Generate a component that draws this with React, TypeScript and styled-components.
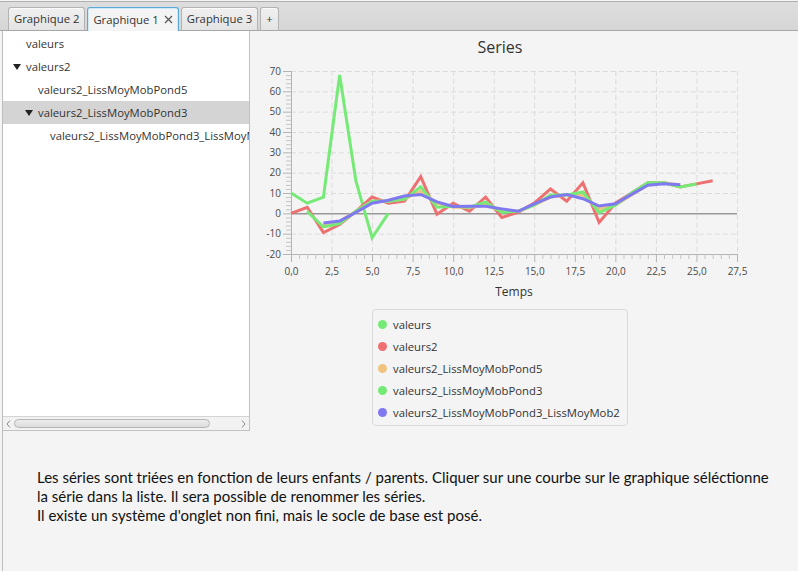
import React from 'react';
import styled, { createGlobalStyle } from 'styled-components';

const GlobalStyle = createGlobalStyle`
  html, body { margin: 0; padding: 0; background: #f4f4f4; overflow: hidden; }
  #root { width: 798px; height: 571px; }
`;

const UI_FONT = `"Open Sans", "Noto Sans", sans-serif`;
const UI_SIZE = '11.3px';

const Window = styled.div`
  width: 798px;
  height: 571px;
  box-sizing: border-box;
  background: #f4f4f4;
  display: flex;
  flex-direction: column;
  font-family: ${UI_FONT};
  color: #333;
`;

const TabHeader = styled.div`
  margin-top: 1px;
  height: 28px;
  border-top: 1px solid #b0b0b0;
  border-bottom: 1px solid #a8a8a8;
  background: linear-gradient(#dddddd, #d6d6d6);
  display: flex;
  align-items: flex-end;
  gap: 2px;
  padding-left: 8px;
  flex-shrink: 0;
`;

const Tab = styled.div<{ $active?: boolean }>`
  height: 24px;
  margin-bottom: -1px;
  box-sizing: border-box;
  padding: 0 5px 1px 5px;
  display: flex;
  align-items: center;
  gap: 5px;
  font-size: ${UI_SIZE};
  color: #333;
  border: 1px solid ${(p) => (p.$active ? '#5aaad8' : '#b3b3b3')};
  border-bottom: ${(p) => (p.$active ? 'none' : '1px solid #a8a8a8')};
  border-radius: 3px 3px 0 0;
  background: ${(p) => (p.$active ? '#f4f4f4' : 'linear-gradient(#f0f0f0, #e4e4e4)')};
  box-shadow: ${(p) => (p.$active ? 'inset 0 1px 0 #cfe8f6, inset 1px 0 0 #cfe8f6, inset -1px 0 0 #cfe8f6' : 'inset 0 1px 0 #fafafa')};
  white-space: nowrap;
`;

const Body = styled.div`
  flex: 1;
  margin-left: 2px;
  border-left: 1px solid #bdbdbd;
  display: flex;
  flex-direction: column;
`;

const ContentRow = styled.div`
  height: 400px;
  display: flex;
  flex-shrink: 0;
`;

const TreePanel = styled.div`
  width: 247px;
  height: 400px;
  box-sizing: border-box;
  background: #ffffff;
  border-right: 1px solid #c2c2c2;
  border-bottom: 1px solid #c2c2c2;
  display: flex;
  flex-direction: column;
  flex-shrink: 0;
  overflow: hidden;
`;

const TreeList = styled.div`
  flex: 1;
  overflow: hidden;
  padding-top: 1px;
`;

const TreeRow = styled.div<{ $level: number; $selected?: boolean }>`
  height: 23px;
  display: flex;
  align-items: center;
  padding-left: ${(p) => 9 + p.$level * 12}px;
  background: ${(p) => (p.$selected ? '#d4d4d4' : 'transparent')};
  font-size: ${UI_SIZE};
  color: #333;
  white-space: nowrap;
  overflow: hidden;
`;

const RowLabel = styled.span`
  overflow: hidden;
  white-space: nowrap;
  text-overflow: clip;
`;

const ArrowSlot = styled.span`
  width: 14px;
  flex-shrink: 0;
  display: flex;
  align-items: center;
`;

const HScrollBar = styled.div`
  height: 13px;
  border-top: 1px solid #d4d4d4;
  background: #f2f2f2;
  display: flex;
  align-items: center;
  padding: 0 3px 0 3px;
  gap: 3px;
  flex-shrink: 0;
`;

const ScrollTrack = styled.div`
  flex: 1;
  display: flex;
  align-items: center;
`;

const ScrollThumb = styled.div`
  width: 196px;
  height: 9px;
  box-sizing: border-box;
  border: 1px solid #b6b6b6;
  border-radius: 5px;
  background: linear-gradient(#ececec, #dcdcdc);
`;

const ChartPane = styled.div`
  flex: 1;
  display: flex;
  flex-direction: column;
  padding-top: 6px;
`;

const ChartBox = styled.div`
  width: 500px;
  display: flex;
  flex-direction: column;
  align-items: center;
`;

const ChartTitle = styled.div`
  font-size: 16px;
  line-height: 20px;
  height: 20px;
  color: #333;
`;

const Legend = styled.div`
  margin-top: 9px;
  box-sizing: border-box;
  width: 256px;
  padding: 3px 6px 2px 5px;
  border: 1px solid #dadada;
  border-radius: 4px;
  background: #f4f4f4;
  display: flex;
  flex-direction: column;
`;

const LegendItem = styled.div`
  height: 22px;
  display: flex;
  align-items: center;
  gap: 6px;
  font-size: ${UI_SIZE};
  color: #333;
  white-space: nowrap;
`;

const LegendDot = styled.span<{ $color: string }>`
  width: 9px;
  height: 9px;
  border-radius: 50%;
  background: ${(p) => p.$color};
  flex-shrink: 0;
`;

const Note = styled.p`
  margin: 37px 0 0 34px;
  font-family: Lato, "Liberation Sans", sans-serif;
  font-size: 15px;
  line-height: 19px;
  color: #111;
`;

const GREEN = '#76ea76';
const RED = '#ee7070';
const ORANGE = '#f0c380';
const PURPLE = '#8078f0';

type Series = { name: string; color: string; start: number; data: number[] };

const SERIES: Series[] = [
  { name: 'valeurs', color: GREEN, start: 0, data: [10, 5, 8, 68, 16, -12, 0] },
  {
    name: 'valeurs2',
    color: RED,
    start: 0,
    data: [0, 3, -9.5, -5.5, 1, 8, 5, 6, 18, -0.5, 5, 1, 8, -2, 0.5, 5, 12, 6, 15, -4.5, 5, 10, 15, 15, 13, 14.5, 16],
  },
  {
    name: 'valeurs2_LissMoyMobPond5',
    color: ORANGE,
    start: 2,
    data: [-6, -4, 1, 6, 6, 7, 11, 5, 3, 3, 4, 1, 1, 4, 8, 9, 9, 2, 4, 9, 14, 15, 14],
  },
  {
    name: 'valeurs2_LissMoyMobPond3',
    color: GREEN,
    start: 1,
    data: [1, -6.7, -5, 1, 6, 6, 7, 13, 3, 3.5, 3, 5.5, 0.6, 1, 4, 9, 9, 10.5, 0.3, 4, 10, 15, 15, 13, 14.4],
  },
  {
    name: 'valeurs2_LissMoyMobPond3_LissMoyMob2',
    color: PURPLE,
    start: 2,
    data: [-4.7, -3.8, 0.5, 5, 6.4, 8.5, 9.3, 5.6, 3.4, 3.5, 3.5, 2.2, 1, 4.7, 8, 9.2, 7.2, 3.6, 4.7, 9.3, 13.8, 14.6, 14.1],
  },
];

const X0 = 41;
const X1 = 487;
const YT = 14;
const YB = 197;
const xs = (x: number) => X0 + (x * (X1 - X0)) / 27.5;
const ys = (y: number) => YT + ((70 - y) * (YB - YT)) / 90;

const fmt = (v: number) => v.toFixed(1).replace('.', ',');

function LineChart() {
  const xMajors: number[] = [];
  for (let i = 0; i <= 11; i++) xMajors.push(i * 2.5);
  const xMinors: number[] = [];
  for (let i = 0; i <= 55; i++) if (i % 5 !== 0) xMinors.push(i * 0.5);
  const yMajors: number[] = [];
  for (let v = -20; v <= 70; v += 10) yMajors.push(v);
  const yMinors: number[] = [];
  for (let v = -20; v <= 70; v += 2) if (v % 10 !== 0) yMinors.push(v);

  return (
    <svg width={500} height={243} viewBox="0 0 500 243">
      {xMajors.filter((v) => v > 0).map((v) => (
        <line key={'gx' + v} x1={xs(v) + 0.5} x2={xs(v) + 0.5} y1={YT} y2={YB} stroke="#dcdcdc" strokeDasharray="5 3" />
      ))}
      {yMajors.filter((v) => v > -20 && v !== 0).map((v) => (
        <line key={'gy' + v} x1={X0} x2={X1} y1={ys(v) + 0.5} y2={ys(v) + 0.5} stroke="#dcdcdc" strokeDasharray="5 3" />
      ))}
      <line x1={X0} x2={X1} y1={ys(0) + 0.5} y2={ys(0) + 0.5} stroke="#6a6a6a" strokeWidth={1} />

      <line x1={X0 + 0.5} x2={X0 + 0.5} y1={YT} y2={YB} stroke="#b4b4b4" />
      {yMajors.map((v) => (
        <line key={'ty' + v} x1={X0 - 8} x2={X0} y1={ys(v) + 0.5} y2={ys(v) + 0.5} stroke="#b4b4b4" />
      ))}
      {yMinors.map((v) => (
        <line key={'my' + v} x1={X0 - 5} x2={X0} y1={ys(v) + 0.5} y2={ys(v) + 0.5} stroke="#c4c4c4" />
      ))}
      {yMajors.map((v) => (
        <text key={'ly' + v} x={X0 - 10} y={ys(v) + 3.5} textAnchor="end" fontSize={10} fill="#4a4a4a" fontFamily={UI_FONT}>
          {v}
        </text>
      ))}

      <line x1={X0} x2={X1 + 1} y1={YB + 0.5} y2={YB + 0.5} stroke="#b4b4b4" />
      {xMajors.map((v) => (
        <line key={'tx' + v} x1={xs(v) + 0.5} x2={xs(v) + 0.5} y1={YB} y2={YB + 8} stroke="#b4b4b4" />
      ))}
      {xMinors.map((v) => (
        <line key={'mx' + v} x1={xs(v) + 0.5} x2={xs(v) + 0.5} y1={YB} y2={YB + 5} stroke="#c4c4c4" />
      ))}
      {xMajors.map((v) => (
        <text key={'lx' + v} x={xs(v) + 0.5} y={YB + 21} textAnchor="middle" fontSize={10} fill="#4a4a4a" fontFamily={UI_FONT}>
          {fmt(v)}
        </text>
      ))}
      <text x={(X0 + X1) / 2} y={YB + 42} textAnchor="middle" fontSize={12} fill="#333" fontFamily={UI_FONT}>
        Temps
      </text>

      {SERIES.map((s) => (
        <polyline
          key={s.name}
          points={s.data.map((v, i) => `${xs(s.start + i)},${ys(v)}`).join(' ')}
          fill="none"
          stroke={s.color}
          strokeWidth={3}
          strokeLinejoin="miter"
        />
      ))}
    </svg>
  );
}

function Triangle() {
  return (
    <svg width={9} height={6} viewBox="0 0 9 6" style={{ marginLeft: 1 }}>
      <polygon points="0,0 8,0 4,6" fill="#222" />
    </svg>
  );
}

function Chevron({ dir }: { dir: 'left' | 'right' }) {
  return (
    <svg width={5} height={8} viewBox="0 0 5 8">
      <polyline
        points={dir === 'left' ? '4,0.5 1,4 4,7.5' : '1,0.5 4,4 1,7.5'}
        fill="none"
        stroke="#8a8a8a"
        strokeWidth={1}
      />
    </svg>
  );
}

function CloseIcon() {
  return (
    <svg width={9} height={9} viewBox="0 0 9 9">
      <path d="M1 1 L8 8 M8 1 L1 8" stroke="#555" strokeWidth={1.2} />
    </svg>
  );
}

const TREE = [
  { label: 'valeurs', level: 0, arrow: false, selected: false },
  { label: 'valeurs2', level: 0, arrow: true, selected: false },
  { label: 'valeurs2_LissMoyMobPond5', level: 1, arrow: false, selected: false },
  { label: 'valeurs2_LissMoyMobPond3', level: 1, arrow: true, selected: true },
  { label: 'valeurs2_LissMoyMobPond3_LissMoyMob2', level: 2, arrow: false, selected: false },
];

export default function App() {
  return (
    <>
      <GlobalStyle />
      <Window>
        <TabHeader>
          <Tab>Graphique 2</Tab>
          <Tab $active>
            Graphique 1
            <CloseIcon />
          </Tab>
          <Tab>Graphique 3</Tab>
          <Tab>+</Tab>
        </TabHeader>
        <Body>
          <ContentRow>
            <TreePanel>
              <TreeList>
                {TREE.map((r) => (
                  <TreeRow key={r.label} $level={r.level} $selected={r.selected}>
                    <ArrowSlot>{r.arrow && <Triangle />}</ArrowSlot>
                    <RowLabel>{r.label}</RowLabel>
                  </TreeRow>
                ))}
              </TreeList>
              <HScrollBar>
                <Chevron dir="left" />
                <ScrollTrack>
                  <ScrollThumb />
                </ScrollTrack>
                <Chevron dir="right" />
              </HScrollBar>
            </TreePanel>
            <ChartPane>
              <ChartBox>
                <ChartTitle>Series</ChartTitle>
                <LineChart />
                <Legend>
                  {SERIES.map((s) => (
                    <LegendItem key={s.name}>
                      <LegendDot $color={s.color} />
                      {s.name}
                    </LegendItem>
                  ))}
                </Legend>
              </ChartBox>
            </ChartPane>
          </ContentRow>
          <Note>
            Les séries sont triées en fonction de leurs enfants / parents. Cliquer sur une courbe sur le graphique séléctionne
            <br />
            la série dans la liste. Il sera possible de renommer les séries.
            <br />
            Il existe un système d'onglet non fini, mais le socle de base est posé.
          </Note>
        </Body>
      </Window>
    </>
  );
}
